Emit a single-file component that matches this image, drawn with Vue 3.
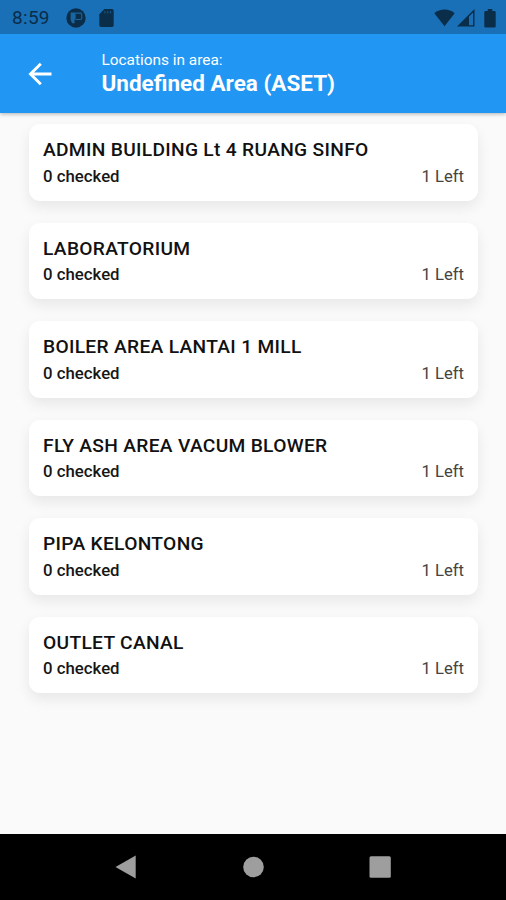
<script setup>
const locations = [
  { name: 'ADMIN BUILDING Lt 4 RUANG SINFO', checked: 0, left: 1 },
  { name: 'LABORATORIUM', checked: 0, left: 1 },
  { name: 'BOILER AREA LANTAI 1 MILL', checked: 0, left: 1 },
  { name: 'FLY ASH AREA VACUM BLOWER', checked: 0, left: 1 },
  { name: 'PIPA KELONTONG', checked: 0, left: 1 },
  { name: 'OUTLET CANAL', checked: 0, left: 1 },
]
</script>

<template>
  <div class="screen">
    <div class="status">
      <span class="clock">8:59</span>
      <svg class="app-icon" width="20" height="20" viewBox="0 0 20 20">
        <circle cx="10" cy="10" r="9.700" />
        <path class="cut" d="M4.600 4.500H9.600V11.500H8.600V15.300H6.200Q4.600 13 4.600 11Z" />
        <path class="cut-line" d="M9.600 5.100H14.600Q15.700 5.100 15.700 6.200V10.300Q15.700 11.500 14.500 11.500H9.600" />
      </svg>
      <svg class="sd-icon" width="15" height="18" viewBox="0 0 15 18">
        <path d="M5.400 0H13a1.700 1.700 0 0 1 1.700 1.700V16.300A1.700 1.700 0 0 1 13 18H2A1.700 1.700 0 0 1 .3 16.300V5.200Z" />
        <path class="slots" d="M5.900 2V4.400M8.700 2V4.400M11.500 2V4.400" />
      </svg>
      <span class="spacer"></span>
      <svg class="wifi" width="21" height="18" viewBox="0 0 21 18">
        <path d="M.3 4.200C6 -.8 15 -.8 20.700 4.200L10.500 17.300Z" />
      </svg>
      <svg class="signal" width="18" height="18" viewBox="0 0 18 18">
        <path fill-rule="evenodd" d="M0 17.500 17.500 0V17.500ZM12 7.500V16.200H16.100V3.400Z" />
      </svg>
      <svg class="battery" width="12" height="19" viewBox="0 0 12 19">
        <path d="M3.700 0h4.600v2H10.500a1.200 1.200 0 0 1 1.200 1.200V17.300a1.200 1.200 0 0 1-1.200 1.200H1.500A1.200 1.200 0 0 1 .3 17.300V3.200A1.200 1.200 0 0 1 1.500 2H3.700Z" />
      </svg>
    </div>

    <header class="bar">
      <svg class="back" width="24" height="24" viewBox="0 0 24 24">
        <path d="M23.500 12H2.500M12.800 1.800 2.500 12l10.300 10.200" />
      </svg>
      <div class="heading">
        <div class="sub">Locations in area:</div>
        <div class="title">Undefined Area (ASET)</div>
      </div>
    </header>

    <main class="list">
      <section v-for="item in locations" :key="item.name" class="card">
        <div class="name">{{ item.name }}</div>
        <div class="row">
          <span class="checked">{{ item.checked }} checked</span>
          <span class="left">{{ item.left }} Left</span>
        </div>
      </section>
    </main>

    <nav class="nav">
      <svg width="24" height="24" viewBox="0 0 24 24"><path d="M1.500 12 21.700.6V23.400Z" /></svg>
      <svg width="24" height="24" viewBox="0 0 24 24"><circle cx="12.500" cy="12" r="10.300" /></svg>
      <svg width="24" height="24" viewBox="0 0 24 24"><rect x="1.500" y="1.200" width="21.300" height="21.600" rx="1.500" /></svg>
    </nav>
  </div>
</template>

<style>
body {
  margin: 0;
}
</style>

<style scoped>
.screen {
  width: 506px;
  height: 900px;
  display: flex;
  flex-direction: column;
  background: #fafafa;
  font-family: Roboto, sans-serif;
  overflow: hidden;
}
.status {
  flex: none;
  box-sizing: border-box;
  height: 34px;
  padding: 2px 10px 0 12px;
  display: flex;
  align-items: center;
  background: #1a70b6;
  color: #0a2d49;
  position: relative;
  z-index: 2;
}
.status svg {
  fill: #0a2d49;
}
.status .cut {
  fill: #1a649f;
}
.status .cut-line {
  fill: none;
  stroke: #1a649f;
  stroke-width: 1.1;
}
.status .slots {
  fill: none;
  stroke: #14507f;
  stroke-width: 1.2;
}
.clock {
  font-size: 19px;
  line-height: 22px;
  letter-spacing: 0.3px;
}
.app-icon {
  margin-left: 16px;
}
.sd-icon {
  margin-left: 13px;
}
.spacer {
  flex: 1;
}
.signal {
  margin-left: 2px;
}
.battery {
  margin-left: 9px;
}
.bar {
  flex: none;
  height: 79px;
  display: flex;
  align-items: center;
  background: #2196f3;
  color: #fff;
  position: relative;
  z-index: 1;
  box-shadow: 0 1px 4px rgba(0, 0, 0, 0.3);
}
.back {
  margin-left: 28px;
  fill: none;
  stroke: #fff;
  stroke-width: 2.9;
}
.heading {
  margin-left: 49.500px;
}
.sub {
  font-size: 15.400px;
  line-height: 19px;
}
.title {
  font-size: 22.500px;
  font-weight: 700;
  line-height: 27px;
}
.list {
  flex: 1;
  padding: 11px 28px 0 29px;
  display: flex;
  flex-direction: column;
  gap: 22px;
}
.card {
  box-sizing: border-box;
  height: 76.500px;
  padding: 14px 14px 0;
  border-radius: 11px;
  background: #fff;
  box-shadow: 0 6px 14px rgba(0, 0, 0, 0.08);
}
.name {
  font-size: 19.200px;
  font-weight: 500;
  line-height: 24px;
  color: #111;
  letter-spacing: 0.310px;
  white-space: nowrap;
}
.row {
  margin-top: 2.700px;
  display: flex;
  justify-content: space-between;
  font-size: 16.800px;
  line-height: 23px;
}
.checked {
  font-weight: 500;
  color: #161616;
}
.left {
  color: #444;
  font-size: 16.600px;
}
.nav {
  flex: none;
  height: 66.500px;
  box-sizing: border-box;
  padding: 0 114px;
  display: flex;
  justify-content: space-between;
  align-items: center;
  background: #000;
}
.nav svg {
  fill: #9e9e9e;
}
</style>
